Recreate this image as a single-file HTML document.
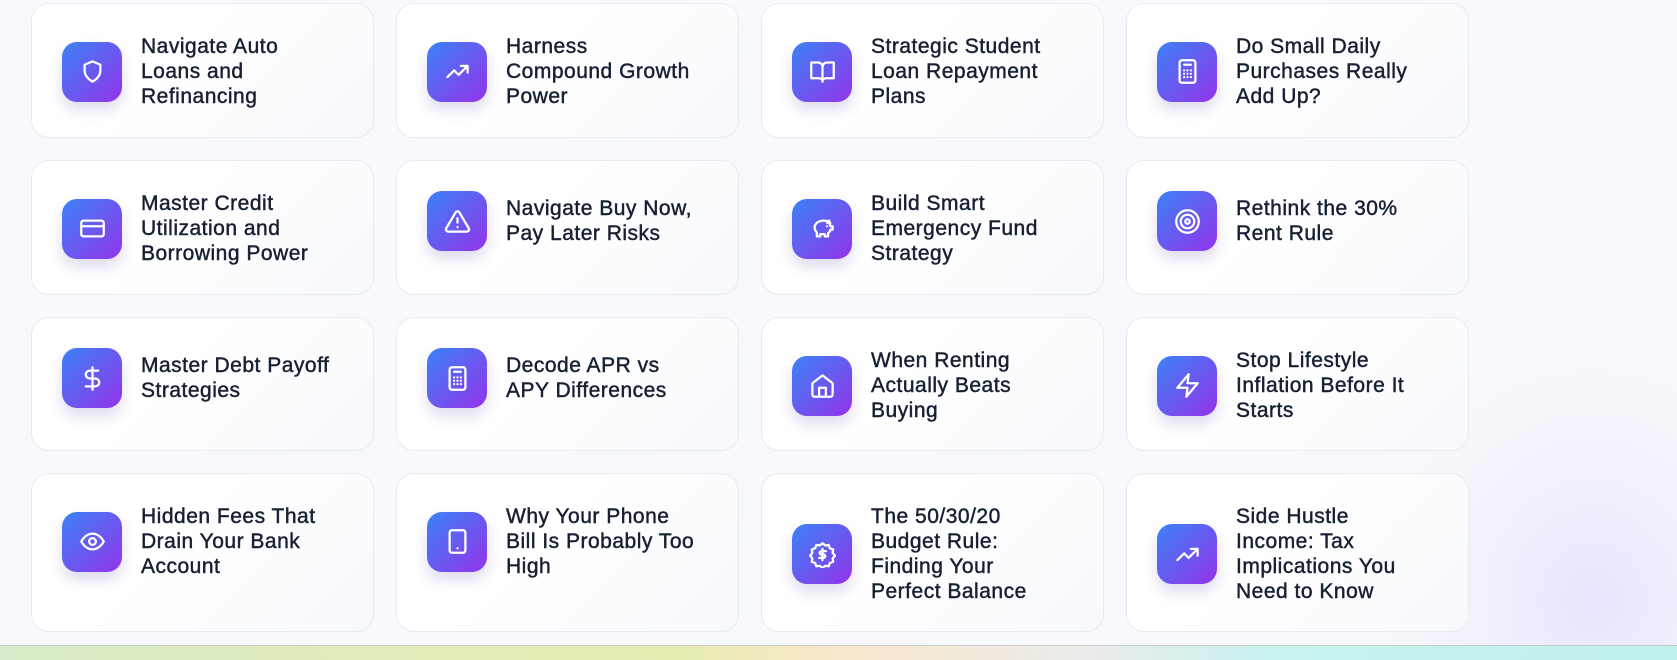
<!DOCTYPE html>
<html><head><meta charset="utf-8"><style>
html,body{margin:0;padding:0;width:1677px;height:660px;overflow:hidden;}
body{background:#f8f9fc;font-family:"Liberation Sans",sans-serif;position:relative;}
.glow{position:absolute;right:-60px;bottom:0;width:360px;height:300px;background:radial-gradient(ellipse at 60% 80%,rgba(221,214,254,.55),rgba(248,249,252,0) 70%);}
.grid{position:absolute;left:31px;top:3px;display:grid;grid-template-columns:repeat(4,343px);column-gap:22px;row-gap:22px;grid-template-rows:135px 135px 134px 159px;}
.card{box-sizing:border-box;background:linear-gradient(135deg,#fff 40%,#f8f9fd);border:1px solid #e8ebf3;border-radius:18px;padding:30px;display:flex;align-items:flex-start;}
.in{display:flex;align-items:center;}
.ic{flex:none;width:60px;height:60px;border-radius:15px;background:linear-gradient(135deg,#3b82f6,#9333ea);box-shadow:0 8px 14px rgba(80,60,160,.18);display:flex;align-items:center;justify-content:center;margin-right:19px;}
.ic svg{width:27px;height:27px;fill:none;stroke:#fff;stroke-width:2;stroke-linecap:round;stroke-linejoin:round;}
.t{font-size:21px;line-height:25px;color:#172033;font-weight:normal;-webkit-text-stroke:0.45px #172033;letter-spacing:.5px;white-space:nowrap;}
.tb{position:absolute;left:0;top:645px;width:1677px;height:15px;border-top:1px solid #c8cbc8;background:linear-gradient(90deg,#d8ebc8 0%,#e6ecb0 40%,#f8e8cc 50%,#ececec 65%,#c8f2f0 75%,#bff0ec 100%);}
</style></head><body>
<div class="glow"></div>
<div class="grid">
<div class="card"><div class="in"><div class="ic"><svg viewBox="0 0 24 24"><path d="M12 3l7 3v5c0 5-3.5 8-7 10-3.5-2-7-5-7-10V6z"/></svg></div><div class="t">Navigate Auto<br>Loans and<br>Refinancing</div></div></div>
<div class="card"><div class="in"><div class="ic"><svg viewBox="0 0 24 24"><path d="M3 17l6-6 4 4 8-8M15 7h6v6"/></svg></div><div class="t">Harness<br>Compound Growth<br>Power</div></div></div>
<div class="card"><div class="in"><div class="ic"><svg viewBox="0 0 24 24"><path d="M2 4h6a4 4 0 014 4v13a3 3 0 00-3-3H2zM22 4h-6a4 4 0 00-4 4v13a3 3 0 013-3h7z"/></svg></div><div class="t">Strategic Student<br>Loan Repayment<br>Plans</div></div></div>
<div class="card"><div class="in"><div class="ic"><svg viewBox="0 0 24 24"><rect x="5" y="2" width="14" height="20" rx="2"/><path d="M9 6h6M9 11h.01M12 11h.01M15 11h.01M9 14h.01M12 14h.01M15 14h.01M9 17h.01M12 17h.01M15 17h.01"/></svg></div><div class="t">Do Small Daily<br>Purchases Really<br>Add Up?</div></div></div>

<div class="card"><div class="in"><div class="ic"><svg viewBox="0 0 24 24"><rect x="2" y="5" width="20" height="14" rx="2"/><path d="M2 10h20"/></svg></div><div class="t">Master Credit<br>Utilization and<br>Borrowing Power</div></div></div>
<div class="card"><div class="in"><div class="ic"><svg viewBox="0 0 24 24"><path d="M10.3 3.9L2 18a2 2 0 001.7 3h16.6a2 2 0 001.7-3L13.7 3.9a2 2 0 00-3.4 0zM12 9v4M12 17h.01"/></svg></div><div class="t">Navigate Buy Now,<br>Pay Later Risks</div></div></div>
<div class="card"><div class="in"><div class="ic"><svg viewBox="0 0 24 24"><path d="M19 7c-1-1-3-2-6-2-5 0-8 3-8 6 0 2 1 3.5 2 4.5V19h3v-2h4v2h3v-3c1-.7 2-1.5 2-3h2v-3h-2c0-1-.5-2-1-2.5V5c-1 0-2 1-2 2zM16 10h.01"/></svg></div><div class="t">Build Smart<br>Emergency Fund<br>Strategy</div></div></div>
<div class="card"><div class="in"><div class="ic"><svg viewBox="0 0 24 24"><circle cx="12" cy="12" r="10"/><circle cx="12" cy="12" r="6"/><circle cx="12" cy="12" r="2"/></svg></div><div class="t">Rethink the 30%<br>Rent Rule</div></div></div>

<div class="card"><div class="in"><div class="ic"><svg viewBox="0 0 24 24"><path d="M12 2v20M17 5H9.5a3.5 3.5 0 000 7h5a3.5 3.5 0 010 7H6"/></svg></div><div class="t">Master Debt Payoff<br>Strategies</div></div></div>
<div class="card"><div class="in"><div class="ic"><svg viewBox="0 0 24 24"><rect x="5" y="2" width="14" height="20" rx="2"/><path d="M9 6h6M9 11h.01M12 11h.01M15 11h.01M9 14h.01M12 14h.01M15 14h.01M9 17h.01M12 17h.01M15 17h.01"/></svg></div><div class="t">Decode APR vs<br>APY Differences</div></div></div>
<div class="card"><div class="in"><div class="ic"><svg viewBox="0 0 24 24"><path d="M3 10l9-7 9 7v10a2 2 0 01-2 2H5a2 2 0 01-2-2z"/><path d="M9 22v-8h6v8"/></svg></div><div class="t">When Renting<br>Actually Beats<br>Buying</div></div></div>
<div class="card"><div class="in"><div class="ic"><svg viewBox="0 0 24 24"><path d="M13 2L3 14h9l-1 8 10-12h-9z"/></svg></div><div class="t">Stop Lifestyle<br>Inflation Before It<br>Starts</div></div></div>

<div class="card"><div class="in"><div class="ic"><svg viewBox="0 0 24 24"><path d="M2 12s3.5-7 10-7 10 7 10 7-3.5 7-10 7S2 12 2 12z"/><circle cx="12" cy="12" r="3"/></svg></div><div class="t">Hidden Fees That<br>Drain Your Bank<br>Account</div></div></div>
<div class="card"><div class="in"><div class="ic"><svg viewBox="0 0 24 24"><rect x="5" y="2" width="14" height="20" rx="2"/><path d="M12 18h.01"/></svg></div><div class="t">Why Your Phone<br>Bill Is Probably Too<br>High</div></div></div>
<div class="card"><div class="in"><div class="ic"><svg viewBox="0 0 24 24"><path d="M12 2l2.5 2 3-.5 1 3 3 1-.5 3 2 2.5-2 2.5.5 3-3 1-1 3-3-.5-2.5 2-2.5-2-3 .5-1-3-3-1 .5-3-2-2.5 2-2.5-.5-3 3-1 1-3 3 .5z"/><path d="M15 9h-4a1.5 1.5 0 000 3h2a1.5 1.5 0 010 3H9M12 7v10"/></svg></div><div class="t">The 50/30/20<br>Budget Rule:<br>Finding Your<br>Perfect Balance</div></div></div>
<div class="card"><div class="in"><div class="ic"><svg viewBox="0 0 24 24"><path d="M3 17l6-6 4 4 8-8M15 7h6v6"/></svg></div><div class="t">Side Hustle<br>Income: Tax<br>Implications You<br>Need to Know</div></div></div>
</div>
<div class="tb"></div>
</body></html>
